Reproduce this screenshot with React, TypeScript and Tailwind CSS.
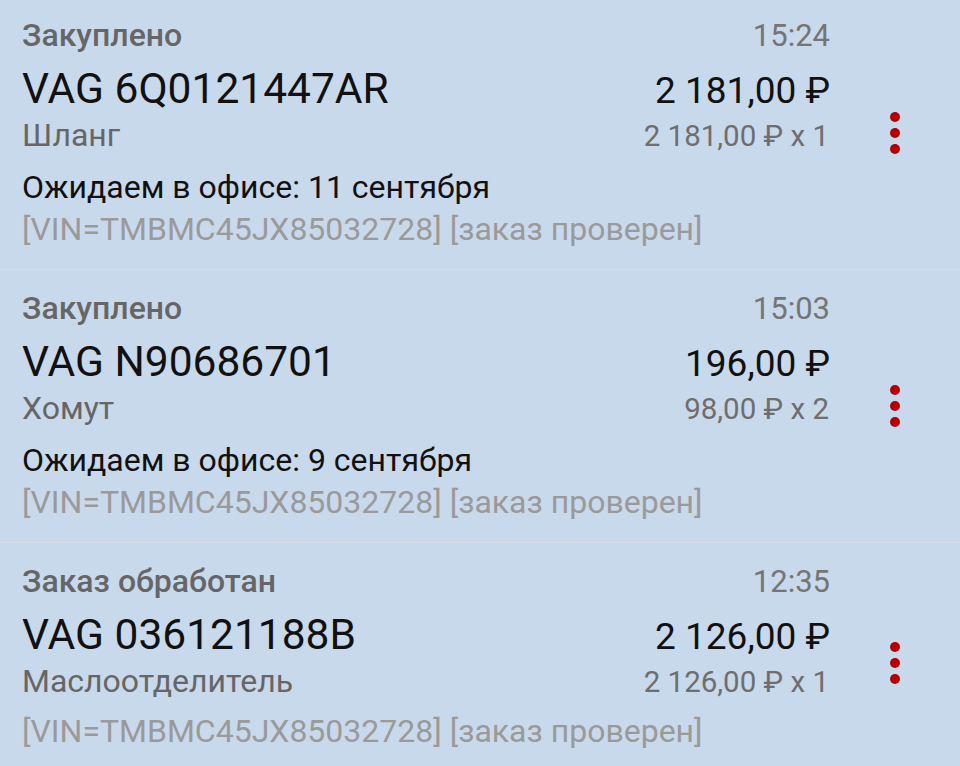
import React from 'react';

type Order = {
  status: string;
  time: string;
  code: string;
  price: string;
  name: string;
  unit: string;
  expected?: string;
  note: string;
};

const orders: Order[] = [
  {
    status: 'Закуплено',
    time: '15:24',
    code: 'VAG 6Q0121447AR',
    price: '2 181,00 ₽',
    name: 'Шланг',
    unit: '2 181,00 ₽ x 1',
    expected: 'Ожидаем в офисе: 11 сентября',
    note: '[VIN=TMBMC45JX85032728] [заказ проверен]',
  },
  {
    status: 'Закуплено',
    time: '15:03',
    code: 'VAG N90686701',
    price: '196,00 ₽',
    name: 'Хомут',
    unit: '98,00 ₽ x 2',
    expected: 'Ожидаем в офисе: 9 сентября',
    note: '[VIN=TMBMC45JX85032728] [заказ проверен]',
  },
  {
    status: 'Заказ обработан',
    time: '12:35',
    code: 'VAG 036121188B',
    price: '2 126,00 ₽',
    name: 'Маслоотделитель',
    unit: '2 126,00 ₽ x 1',
    note: '[VIN=TMBMC45JX85032728] [заказ проверен]',
  },
];

const MoreIcon = () => (
  <svg width="12" height="44" viewBox="0 0 12 44" aria-hidden="true">
    <circle cx="6" cy="6" r="5" fill="#b30000" />
    <circle cx="6" cy="22" r="5" fill="#b30000" />
    <circle cx="6" cy="38" r="5" fill="#b30000" />
  </svg>
);

const OrderRow: React.FC<{ order: Order }> = ({ order }) => {
  const { status, time, code, price, name, unit, expected, note } = order;

  return (
    <div className="flex items-center border-b border-[#d4dde6]">
      <div className={`flex-1 pt-[20px] pl-[22px] ${expected ? 'pb-[22px]' : 'pb-[34px]'}`}>
        <div className="flex items-baseline justify-between leading-[36px]">
          <span className="text-[32px] font-medium text-[#666666]">{status}</span>
          <span className="text-[31px] text-[#757575]">{time}</span>
        </div>

        <div className="mt-[6px] flex items-baseline justify-between leading-[58px]">
          <span className="text-[42.5px] text-[#111111]">{code}</span>
          <span className="text-[37px] text-[#111111]">{price}</span>
        </div>

        <div className="flex items-baseline justify-between leading-[30px]">
          <span className="text-[32px] text-[#666666]">{name}</span>
          <span className="pr-[1px] text-[29.5px] text-[#6e6e6e]">{unit}</span>
        </div>

        {expected ? (
          <div className="mt-[18px]">
            <p className="text-[32px] leading-[36px] text-[#111111]">{expected}</p>
            <p className="mt-[6px] text-[32px] leading-[36px] text-[#9a9a9a]">{note}</p>
          </div>
        ) : (
          <p className="mt-[16px] text-[32px] leading-[36px] text-[#9a9a9a]">{note}</p>
        )}
      </div>

      <div className="flex w-[130px] justify-center">
        <MoreIcon />
      </div>
    </div>
  );
};

export default function App() {
  return (
    <div
      className="h-[766px] w-[960px] overflow-hidden bg-[#c9d9ec]"
      style={{ fontFamily: 'Roboto, "Noto Sans", sans-serif' }}>
      <div className="-mt-[3px]">
        {orders.map((order) => (
          <OrderRow key={order.code} order={order} />
        ))}
      </div>
    </div>
  );
}
